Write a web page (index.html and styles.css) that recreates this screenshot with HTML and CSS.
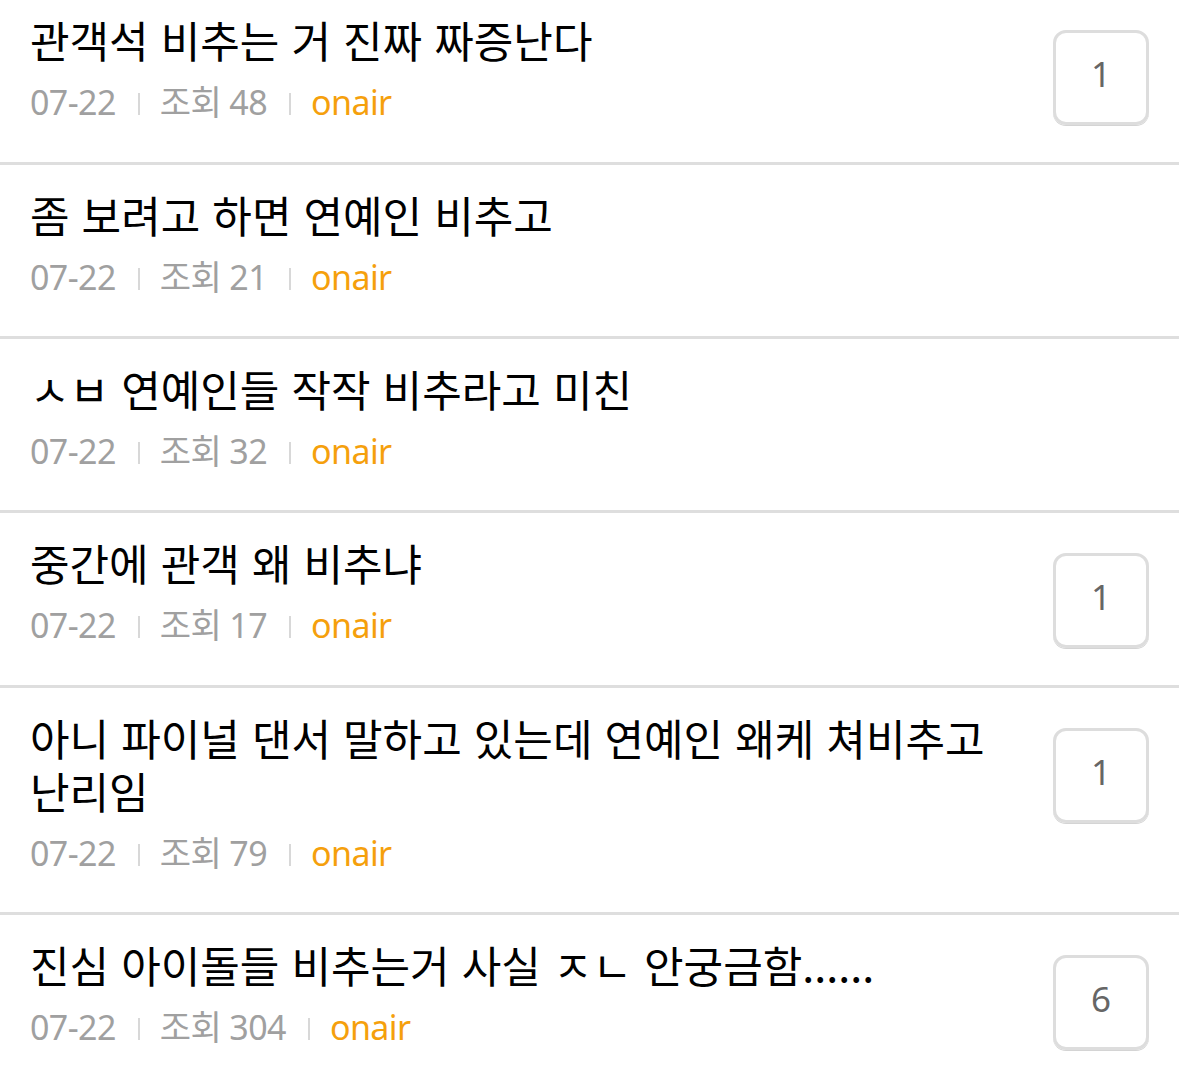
FILE: index.html
```html
<!DOCTYPE html>
<html lang="ko">
<head>
<meta charset="utf-8">
<link rel="stylesheet" href="styles.css">
</head>
<body>
<ul class="list">
  <li class="row first">
    <div class="body">
      <div class="title">관객석 비추는 거 진짜 짜증난다</div>
      <div class="meta"><span>07-22</span><i class="sep"></i><span>조회 48</span><i class="sep"></i><span class="nick">onair</span></div>
    </div>
    <div class="count">1</div>
  </li>
  <li class="row">
    <div class="body">
      <div class="title">좀 보려고 하면 연예인 비추고</div>
      <div class="meta"><span>07-22</span><i class="sep"></i><span>조회 21</span><i class="sep"></i><span class="nick">onair</span></div>
    </div>
  </li>
  <li class="row">
    <div class="body">
      <div class="title">ㅅㅂ 연예인들 작작 비추라고 미친</div>
      <div class="meta"><span>07-22</span><i class="sep"></i><span>조회 32</span><i class="sep"></i><span class="nick">onair</span></div>
    </div>
  </li>
  <li class="row">
    <div class="body">
      <div class="title">중간에 관객 왜 비추냐</div>
      <div class="meta"><span>07-22</span><i class="sep"></i><span>조회 17</span><i class="sep"></i><span class="nick">onair</span></div>
    </div>
    <div class="count">1</div>
  </li>
  <li class="row">
    <div class="body">
      <div class="title">아니 파이널 댄서 말하고 있는데 연예인 왜케 쳐비추고 난리임</div>
      <div class="meta"><span>07-22</span><i class="sep"></i><span>조회 79</span><i class="sep"></i><span class="nick">onair</span></div>
    </div>
    <div class="count">1</div>
  </li>
  <li class="row">
    <div class="body">
      <div class="title">진심 아이돌들 비추는거 사실 ㅈㄴ 안궁금함......</div>
      <div class="meta"><span>07-22</span><i class="sep"></i><span>조회 304</span><i class="sep"></i><span class="nick">onair</span></div>
    </div>
    <div class="count">6</div>
  </li>
</ul>
</body>
</html>
```
FILE: styles.css
```css
html, body {
  margin: 0;
  padding: 0;
  background: #fff;
}
body {
  font-family: "Noto Sans CJK KR", "Noto Sans", sans-serif;
  overflow: hidden;
}
.list {
  list-style: none;
  margin: 0;
  padding: 0;
}
.row {
  display: flex;
  align-items: flex-start;
  padding: 23px 30px 37px 30px;
  border-bottom: 3px solid #dedede;
}
.row.first {
  padding-top: 13px;
}
.body {
  flex: 1;
  min-width: 0;
  padding-right: 24px;
}
.title {
  font-size: 43px;
  line-height: 53px;
  letter-spacing: 0;
  color: #000;
}
.meta {
  margin-top: 14px;
  display: flex;
  align-items: center;
  font-family: "Noto Sans", "Noto Sans CJK KR", sans-serif;
  font-size: 34px;
  line-height: 44px;
  color: #a0a0a0;
  letter-spacing: -0.6px;
}
.sep {
  display: inline-block;
  width: 2px;
  height: 22px;
  background: #d8d8d8;
  margin: 4px 20px 0 22px;
}
.nick {
  color: #f5a00c;
}
.count {
  flex: none;
  width: 90px;
  height: 81px;
  padding-bottom: 8px;
  margin-top: 17px;
  border: 3px solid #dddddd;
  border-radius: 13px;
  box-shadow: 0 1px 0 #d4d4d4;
  display: flex;
  align-items: center;
  justify-content: center;
  font-family: "Noto Sans", sans-serif;
  font-size: 35px;
  color: #666;
  box-sizing: content-box;
}
```
